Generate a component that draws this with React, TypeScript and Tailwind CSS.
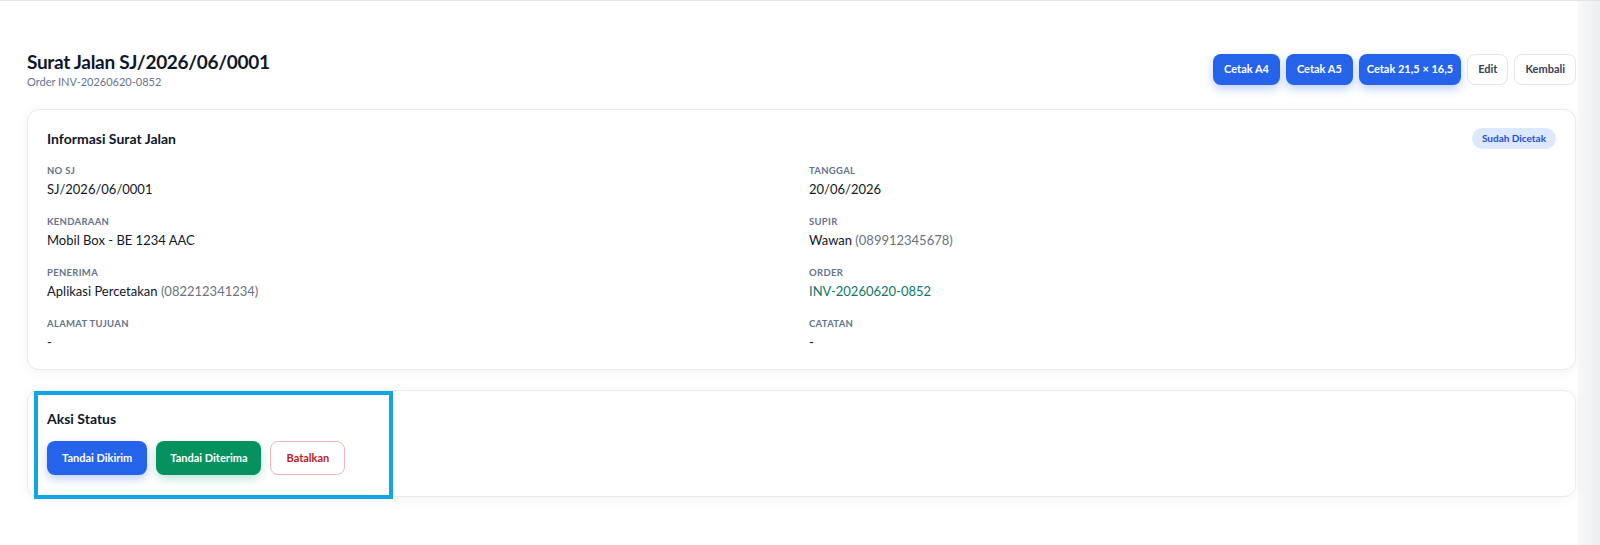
import React from 'react';

type Field = {
  label: string;
  value: string;
  extra?: string;
  tone?: 'link';
};

const fields: Field[] = [
  { label: 'No SJ', value: 'SJ/2026/06/0001' },
  { label: 'Tanggal', value: '20/06/2026' },
  { label: 'Kendaraan', value: 'Mobil Box - BE 1234 AAC' },
  { label: 'Supir', value: 'Wawan', extra: '(089912345678)' },
  { label: 'Penerima', value: 'Aplikasi Percetakan', extra: '(082212341234)' },
  { label: 'Order', value: 'INV-20260620-0852', tone: 'link' },
  { label: 'Alamat Tujuan', value: '-' },
  { label: 'Catatan', value: '-' },
];

const printButtons = [
  { label: 'Cetak A4', pad: 'px-[11px]' },
  { label: 'Cetak A5', pad: 'px-[11px]' },
  { label: 'Cetak 21,5 × 16,5', pad: 'px-[8px]' },
];

export default function App() {
  return (
    <div className="w-[1600px] h-[545px] bg-white text-slate-900 font-['Lato','Noto_Sans',sans-serif] border-t border-[#e3e5e8] flex overflow-hidden">
      <main className="flex-1 pl-[27px] pr-[2px] pt-[48px]">
        {/* Header */}
        <div className="flex items-start justify-between">
          <div>
            <h1 className="text-[19px] leading-[26px] font-bold tracking-[-0.3px] text-[#0f172a]">
              Surat Jalan SJ/2026/06/0001
            </h1>
            <p className="text-[11px] leading-[14px] text-slate-500">Order INV-20260620-0852</p>
          </div>
          <div className="flex items-center gap-[6px] mt-[5px]">
            {printButtons.map((b) => (
              <button
                key={b.label}
                className={`h-[31px] ${b.pad} rounded-lg bg-[#2563eb] text-white text-[11px] font-bold shadow-[0_4px_10px_rgba(37,99,235,0.3)]`}
              >
                {b.label}
              </button>
            ))}
            <button className="h-[31px] px-[10px] rounded-lg bg-white border border-[#e2e5ea] text-slate-700 text-[11px] font-bold">
              Edit
            </button>
            <button className="h-[31px] px-[10px] rounded-lg bg-white border border-[#e2e5ea] text-slate-700 text-[11px] font-bold">
              Kembali
            </button>
          </div>
        </div>

        {/* Informasi Surat Jalan */}
        <section className="mt-[20px] rounded-xl border border-[#e8ebef] bg-white shadow-[0_2px_12px_rgba(15,23,42,0.05)] px-[19px] pt-[18px] pb-[17px]">
          <div className="flex items-center justify-between">
            <h2 className="text-[14px] leading-[20px] font-bold text-[#0f172a]">Informasi Surat Jalan</h2>
            <span className="h-[21px] px-[10px] rounded-full bg-[#dbe8fd] text-[#1d4ed8] text-[10px] font-bold flex items-center">
              Sudah Dicetak
            </span>
          </div>
          <div className="grid grid-cols-2 gap-x-[15px] gap-y-[16px] mt-[15px]">
            {fields.map((f) => (
              <div key={f.label}>
                <div className="text-[9.5px] leading-[14px] font-bold uppercase tracking-[0.3px] text-slate-500">
                  {f.label}
                </div>
                <div
                  className={`text-[13px] leading-[20px] mt-[1px] ${
                    f.tone === 'link' ? 'text-[#0f766e]' : 'text-[#0f172a]'
                  }`}
                >
                  {f.value}
                  {f.extra && <span className="text-gray-500"> {f.extra}</span>}
                </div>
              </div>
            ))}
          </div>
        </section>

        {/* Aksi Status */}
        <section className="relative mt-[20px] rounded-xl border border-[#e8ebef] bg-white shadow-[0_2px_12px_rgba(15,23,42,0.05)] px-[19px] pt-[18px] pb-[21px]">
          <h2 className="text-[14px] leading-[20px] font-bold text-[#0f172a]">Aksi Status</h2>
          <div className="flex items-center gap-[9px] mt-[12px]">
            <button className="h-[34px] px-[15px] rounded-lg bg-[#2563eb] text-white text-[11px] font-bold shadow-[0_4px_10px_rgba(37,99,235,0.3)]">
              Tandai Dikirim
            </button>
            <button className="h-[34px] px-[14px] rounded-lg bg-[#05925f] text-white text-[11px] font-bold shadow-[0_4px_10px_rgba(5,150,105,0.25)]">
              Tandai Diterima
            </button>
            <button className="h-[34px] px-[15px] rounded-lg bg-white border border-[#f3b4b4] text-[#b91c1c] text-[11px] font-bold">
              Batalkan
            </button>
          </div>
          <div className="absolute left-[6px] top-[0px] w-[359px] h-[108px] border-4 border-[#11a4e6] pointer-events-none" />
        </section>
      </main>
      <aside className="w-[22px] bg-gradient-to-r from-[#f7f8f9] to-[#eceef0]" />
    </div>
  );
}
